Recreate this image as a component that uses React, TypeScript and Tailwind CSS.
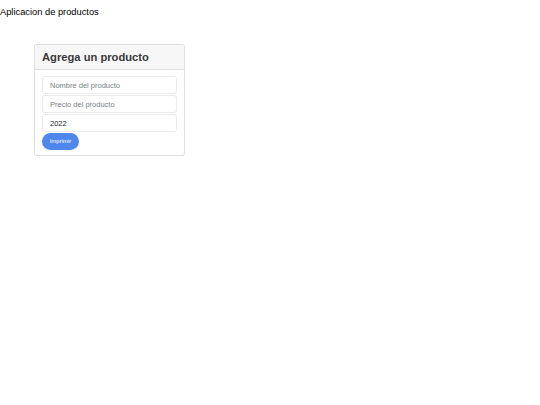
import { useState } from 'react';

export default function App() {
  const [nombre, setNombre] = useState('');
  const [precio, setPrecio] = useState('');
  const [anio, setAnio] = useState('2022');

  return (
    <div className="min-h-[405px] bg-white text-[#212529] font-['Liberation_Sans',Arial,sans-serif]">
      <p className="pt-[6px] text-[9.3px] leading-[12px] text-black">Aplicacion de productos</p>

      <div className="mt-[26px] ml-[34px] w-[151px] rounded-[3px] border border-[#dedede] overflow-hidden">
        <div className="h-[25px] bg-[#f7f7f7] border-b border-[#dedede] px-[7px] flex items-center">
          <h5 className="text-[11.2px] font-bold text-[#3a3a3a]">Agrega un producto</h5>
        </div>
        <div className="px-[7px] pt-[6px] pb-[5px] flex flex-col items-start gap-[1px]">
          <input
            className="h-[18px] w-full rounded-[3px] border border-[#ebebeb] px-[7px] text-[7.5px] text-[#212529] placeholder:text-[#7a7f85] outline-none"
            placeholder="Nombre del producto"
            value={nombre}
            onChange={(e) => setNombre(e.target.value)}
          />
          <input
            className="h-[18px] w-full rounded-[3px] border border-[#ebebeb] px-[7px] text-[7.5px] text-[#212529] placeholder:text-[#7a7f85] outline-none"
            placeholder="Precio del producto"
            value={precio}
            onChange={(e) => setPrecio(e.target.value)}
          />
          <input
            className="h-[18px] w-full rounded-[3px] border border-[#ebebeb] px-[7px] text-[7.5px] text-[#212529] outline-none"
            value={anio}
            onChange={(e) => setAnio(e.target.value)}
          />
          <button className="h-[17px] w-[37px] rounded-full bg-[#4f86ec] text-[6px] leading-[17px] text-white">
            Imprimir
          </button>
        </div>
      </div>
    </div>
  );
}
